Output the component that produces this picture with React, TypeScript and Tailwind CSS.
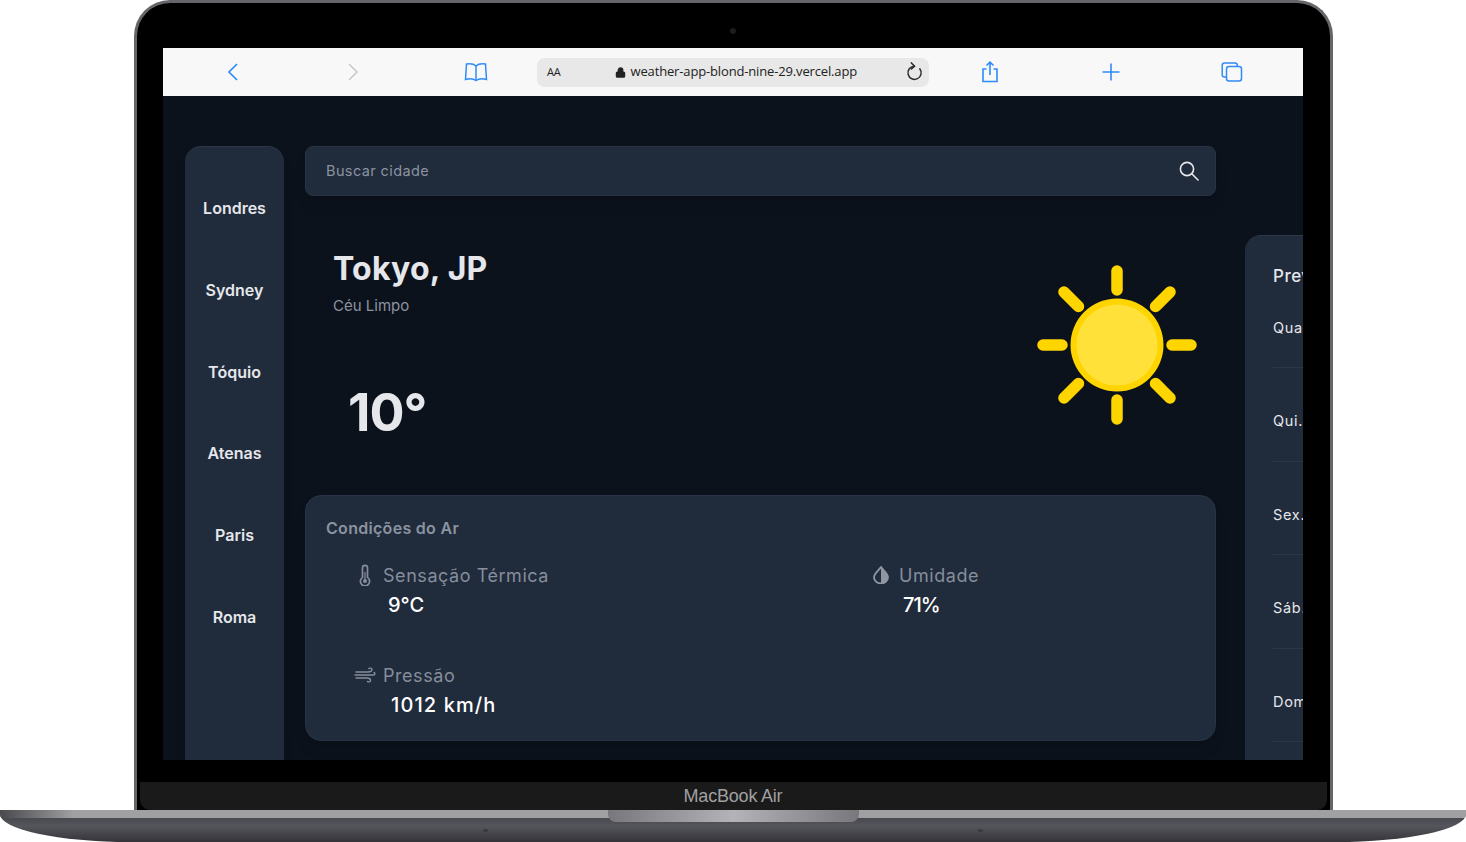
import { Lock } from 'lucide-react';

const cities = ['Londres', 'Sydney', 'Tóquio', 'Atenas', 'Paris', 'Roma'];
const forecast = ['Qua., 12', 'Qui., 13', 'Sex., 14', 'Sáb., 15', 'Dom., 16'];
const rays = [0, 45, 90, 135, 180, 225, 270, 315];

function BrowserBar() {
  return (
    <div className="flex h-[48px] shrink-0 items-center bg-[#f8f8f8] pl-[10px] pr-[10px]">
      <div className="flex h-full w-[120px] items-center justify-center">
        <svg width="12" height="18" viewBox="0 0 12 18" fill="none" stroke="#2f8bfa" strokeWidth="1.7">
          <path d="M10 1L2 9L10 17" />
        </svg>
      </div>
      <div className="flex h-full w-[120px] items-center justify-center">
        <svg width="12" height="18" viewBox="0 0 12 18" fill="none" stroke="#c8c8c8" strokeWidth="1.5">
          <path d="M2 1L10 9L2 17" />
        </svg>
      </div>
      <div className="flex h-full w-[126px] items-center justify-center">
        <svg width="24" height="20" viewBox="0 0 24 20" fill="none" stroke="#2f8bfa" strokeWidth="1.5">
          <path d="M12 4C10 2 6 1.5 2.5 2L1.5 17.5C5 16.6 9.5 16.8 12 18.5C14.5 16.8 19 16.6 22.5 17.5L21.5 2C18 1.5 14 2 12 4Z" />
          <path d="M12 4V18.5" />
        </svg>
      </div>
      <div className="-ml-[2px] flex h-[29px] w-[392px] items-center rounded-[8px] bg-[#e8e8e8] pl-[10px] pr-[6px] font-['Open_Sans',sans-serif] text-[#222]">
        <span className="text-[11px] font-medium tracking-[-0.2px]">AA</span>
        <div className="ml-[54px] flex flex-1 items-center gap-[5px] text-[13px] tracking-[-0.15px]">
          <Lock size={11} strokeWidth={2.6} className="fill-[#222]" />
          <span>weather-app-blond-nine-29.vercel.app</span>
        </div>
        <svg width="18" height="20" viewBox="0 0 18 20" fill="none" stroke="#2a2a2a" strokeWidth="1.5" strokeLinecap="round">
          <path d="M14.8 6.8A6.6 6.6 0 1 1 9 4.2" />
          <path d="M6.4 0.9L9.6 4.2L6.4 7" />
        </svg>
      </div>
      <div className="flex h-full w-[122px] items-center justify-center">
        <svg width="18" height="22" viewBox="0 0 18 22" fill="none" stroke="#2f8bfa" strokeWidth="1.6">
          <path d="M5.5 8H2V20.5H16V8H12.5" />
          <path d="M9 14V1.5M5.5 4.5L9 1.2L12.5 4.5" />
        </svg>
      </div>
      <div className="flex h-full w-[120px] items-center justify-center">
        <svg width="18" height="18" viewBox="0 0 18 18" fill="none" stroke="#2f8bfa" strokeWidth="1.6">
          <path d="M9 0.5V17.5M0.5 9H17.5" />
        </svg>
      </div>
      <div className="flex h-full w-[122px] items-center justify-center">
        <svg width="22" height="20" viewBox="0 0 22 20" fill="none" stroke="#2f8bfa" strokeWidth="1.5">
          <rect x="5.5" y="4.5" width="15" height="14.5" rx="2.5" />
          <path d="M5.5 15H3.5C2.2 15 1.2 14 1.2 12.7V3.3C1.2 2 2.2 1 3.5 1H14C15.3 1 16.3 2 16.3 3.3V4.5" />
        </svg>
      </div>
    </div>
  );
}

function Sun() {
  return (
    <svg width="162" height="162" viewBox="-81 -81 162 162" className="shrink-0">
      {rays.map((angle) => (
        <line
          key={angle}
          x1="0"
          y1={angle % 90 === 0 ? -55 : -54.5}
          x2="0"
          y2={angle % 90 === 0 ? -74 : -75}
          stroke="#ffd500"
          strokeWidth="11.5"
          strokeLinecap="round"
          transform={`rotate(${angle})`}
        />
      ))}
      <circle r="46.5" fill="#ffd500" />
      <circle r="40.5" fill="#ffe13a" />
    </svg>
  );
}

function WeatherDetail({ label, value, icon, valueClass }: { label: string; value: string; icon: React.ReactNode; valueClass: string }) {
  return (
    <div>
      <div className="flex h-[24px] items-center text-[18px] tracking-[0.55px] text-[#868e9c]">
        <div className="flex w-[24px] justify-center">{icon}</div>
        <span className="ml-[6px]">{label}</span>
      </div>
      <div className={`mt-[3px] text-[20px] font-medium leading-[30px] text-white ${valueClass}`}>{value}</div>
    </div>
  );
}

export default function App() {
  return (
    <div className="relative flex h-[842px] w-[1466px] flex-col items-center overflow-hidden bg-white font-['Inter',sans-serif]">
      {/* lid */}
      <div className="relative flex h-[810px] w-[1199px] shrink-0 flex-col items-center rounded-t-[36px] border-x-[3px] border-t-[3px] border-[#66666a] bg-black pt-[45px]">
        <div className="absolute left-[593px] top-[25px] h-[6px] w-[6px] rounded-full bg-[#1c1c20]" />
        <div className="flex h-[712px] w-[1140px] shrink-0 flex-col overflow-hidden bg-[#0c121c]">
          <BrowserBar />
          <div className="flex flex-1 items-start overflow-hidden pl-[22px] pt-[50px]">
            <aside className="flex h-[640px] w-[99px] shrink-0 flex-col items-center rounded-t-[16px] border-t border-[#2c3748] bg-[#202b3b] pt-[49px] text-[16px] font-semibold text-[#e5e7eb] shadow-lg">
              {cities.map((city) => (
                <div key={city} className="flex h-[81.8px] items-start">
                  {city}
                </div>
              ))}
            </aside>
            <main className="ml-[21px] w-[911px] shrink-0">
              <div className="flex h-[50px] items-center justify-between rounded-[8px] border border-[#283345] bg-[#202b3b] pl-[20px] pr-[16px] shadow-lg">
                <span className="text-[14.5px] tracking-[0.4px] text-[#8b93a0]">Buscar cidade</span>
                <svg width="20" height="20" viewBox="0 0 20 20" fill="none" stroke="#e5e7eb" strokeWidth="1.6" strokeLinecap="round">
                  <circle cx="8" cy="8" r="6.6" />
                  <path d="M12.8 12.8L19 19" />
                </svg>
              </div>
              <div className="flex h-[299px] justify-between pl-[28px] pr-[18px]">
                <div>
                  <h1 className="mt-[53px] text-[32px] font-bold leading-[40px] tracking-[0.25px] text-[#e5e7eb]">Tokyo, JP</h1>
                  <p className="mt-[7px] text-[15px] leading-[20px] text-[#8b93a0]">Céu Limpo</p>
                  <p className="ml-[15px] mt-[62px] text-[52px] font-bold leading-[70px] tracking-[-1px] text-[#e5e7eb]">10°</p>
                </div>
                <div className="pt-[68px]">
                  <Sun />
                </div>
              </div>
              <section className="h-[246px] rounded-[16px] border border-[#283345] bg-[#202b3b] pl-[20px] pt-[20px] shadow-lg">
                <h2 className="text-[16px] font-semibold leading-[24px] tracking-[0.3px] text-[#8b93a0]">Condições do Ar</h2>
                <div className="mt-[23px] grid grid-cols-[516px_1fr] gap-y-[43px] pl-[27px]">
                  <WeatherDetail
                    label="Sensação Térmica"
                    value="9°C"
                    valueClass="ml-[35px]"
                    icon={
                      <svg width="12" height="22" viewBox="0 0 12 22" fill="none" stroke="#868e9c" strokeWidth="1.7">
                        <path d="M3.5 3.8a2.5 2.5 0 0 1 5 0v9.6a4.6 4.6 0 1 1-5 0z" />
                        <circle cx="6" cy="17" r="2" fill="#868e9c" stroke="none" />
                        <path d="M6 8V16" strokeWidth="1.2" />
                      </svg>
                    }
                  />
                  <WeatherDetail
                    label="Umidade"
                    value="71%"
                    valueClass="ml-[34px] tracking-[-1px]"
                    icon={
                      <svg width="16" height="18" viewBox="0 0 16 18">
                        <path d="M8 1C5.5 4.5 1 7.5 1 11.2A7 6.3 0 0 0 15 11.2C15 7.5 10.5 4.5 8 1Z" fill="none" stroke="#8f96a3" strokeWidth="1.8" />
                        <path d="M8 1C10.5 4.5 15 7.5 15 11.2A7 6.3 0 0 1 8 17.5Z" fill="#8f96a3" />
                      </svg>
                    }
                  />
                  <WeatherDetail
                    label="Pressão"
                    value="1012 km/h"
                    valueClass="ml-[38px] tracking-[1.1px]"
                    icon={
                      <svg width="22" height="18" viewBox="0 0 22 18" fill="none" stroke="#868e9c" strokeWidth="1.4" strokeLinecap="round">
                        <path d="M2 6H14C16 6 18 5.4 18 3.6C18 2.2 16 1.6 14.8 2.6" />
                        <path d="M1 9H19C21 9 21.5 7 20 6.4" />
                        <path d="M2 12H13C15 12 16.5 12.8 16.5 14.4C16.5 15.8 14.6 16.4 13.5 15.4" />
                      </svg>
                    }
                  />
                </div>
              </section>
            </main>
            <aside className="ml-[29px] mt-[89px] h-[600px] w-[300px] shrink-0 rounded-t-[16px] border-t border-[#2c3748] bg-[#202b3b] pl-[28px] pt-[27px] text-[#e5e7eb]">
              <h2 className="text-[17px] font-medium leading-[26px] tracking-[0.5px]">Previsão</h2>
              {forecast.map((day, i) => (
                <div
                  key={day}
                  className={i === 0
                    ? 'flex h-[79px] items-start border-b border-[#2c3748] pt-[29px] text-[14.5px] leading-[20px] tracking-[0.7px]'
                    : 'flex h-[93.5px] items-start border-b border-[#2c3748] pt-[43px] text-[14.5px] leading-[20px] tracking-[0.7px]'}
                >
                  {day}
                </div>
              ))}
            </aside>
          </div>
        </div>
        <div className="mt-[22px] flex h-[28px] w-[1187px] shrink-0 items-center justify-center rounded-b-[10px] bg-[#1a1a1a] font-['Liberation_Sans',sans-serif] text-[18px] tracking-[-0.2px] text-[#a0a0a0]">
          MacBook Air
        </div>
      </div>
      {/* base */}
      <div className="relative h-[32px] w-full shrink-0 overflow-hidden rounded-b-[130px_28px] bg-gradient-to-b from-[#3c3c44] via-[#55555c] to-[#34343a]">
        <div className="h-[8px] bg-gradient-to-r from-[#4a4a4e] via-[#a0a0a3] via-5% to-[#a0a0a3]" />
        <div className="absolute left-[608px] top-0 h-[12px] w-[251px] rounded-b-[8px] bg-gradient-to-r from-[#77777c] via-[#b4b4b8] to-[#77777c]" />
        <div className="absolute left-[483px] top-[19px] h-[3px] w-[5px] rounded-full bg-[#3a3a40]" />
        <div className="absolute left-[978px] top-[19px] h-[3px] w-[5px] rounded-full bg-[#3a3a40]" />
      </div>
    </div>
  );
}
